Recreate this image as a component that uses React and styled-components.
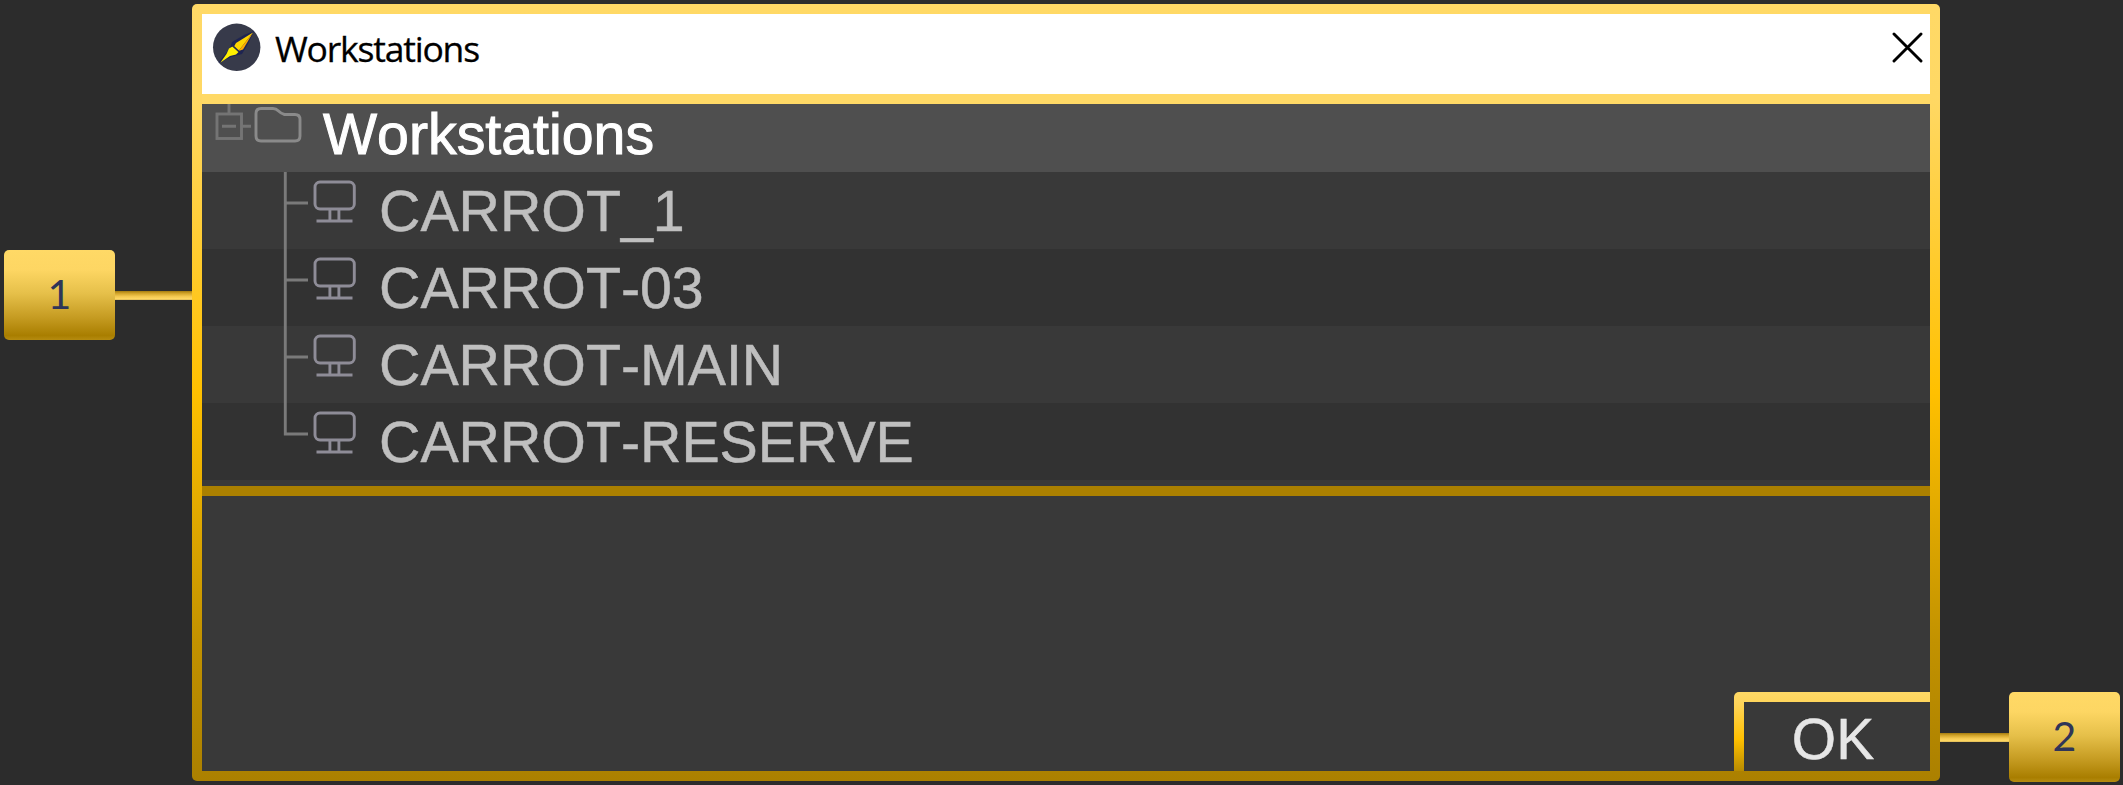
import React from "react";
import styled, { createGlobalStyle } from "styled-components";

const Global = createGlobalStyle`
  * { box-sizing: border-box; }
  body { margin: 0; background: #2c2c2c; overflow: hidden; }
`;

const Page = styled.main`
  display: flex;
  align-items: flex-start;
  width: 2123px;
  height: 785px;
  padding: 4px 0 0 4px;
  background: #2c2c2c;
`;

const Callout = styled.div`
  display: flex;
  align-items: center;
  flex: none;
  margin-top: ${(p) => p.$top}px;
`;

const Badge = styled.div`
  width: 111px;
  height: 90px;
  border-radius: 5px;
  background: linear-gradient(#ffd966 0%, #fdd663 22%, #e6c04a 48%, #c49a20 76%, #a97e00 95%, #b58b10 100%);
  color: #2f3558;
  font: 41px/88px Lato, sans-serif;
  text-align: center;
`;

const Connector = styled.div`
  width: ${(p) => p.$width}px;
  height: 9px;
  background: linear-gradient(#a47c10, #d0a228 25%, #f3c850 60%, #ffd966 90%, #c8a850);
`;

const Frame = styled.section`
  flex: none;
  width: 1748px;
  height: 777px;
  padding: 10px;
  border-radius: 5px;
  background: linear-gradient(#ffd966 0%, #ffd864 12%, #ffc000 50%, #c29200 82%, #ab8000 100%);
`;

const Dialog = styled.div`
  display: flex;
  flex-direction: column;
  height: 757px;
  background: #393939;
`;

const TitleBar = styled.header`
  display: flex;
  align-items: flex-start;
  height: 90px;
  padding: 9px 6px 0 10px;
  border-bottom: 10px solid #ffd966;
  background: #fff;
`;

const Title = styled.h1`
  flex: 1;
  margin: 1px 0 0 13px;
  color: #000;
  font: 400 35.5px/48px "Open Sans", sans-serif;
  letter-spacing: -1.2px;
  -webkit-text-stroke: 0.3px;
`;

const Tree = styled.div`
  height: 392px;
  border-bottom: 10px solid #ab8000;
`;

const Row = styled.div`
  display: flex;
  height: ${(p) => (p.$root ? 68 : 77)}px;
  background: ${(p) => (p.$root ? "#4f4f4f" : p.$odd ? "#323232" : "#393939")};
  color: ${(p) => (p.$root ? "#fff" : "#bfbfbf")};
  font: 57.3px/64px "Liberation Sans", sans-serif;
  font-kerning: none;
  white-space: nowrap;
  -webkit-text-stroke: ${(p) => (p.$root ? 1 : 0.5)}px;
`;

const Label = styled.span`
  margin-top: ${(p) => p.$top}px;
`;

const Footer = styled.footer`
  display: flex;
  flex: 1;
  align-items: flex-end;
  justify-content: flex-end;
`;

const ButtonFrame = styled.div`
  width: 196px;
  height: 79px;
  padding: 10px 0 0 10px;
  border-radius: 5px 0 0 0;
  background: linear-gradient(#ffd966 0%, #ffd55a 15%, #ffc000 60%, #b88b00 100%);
`;

const OkButton = styled.button`
  display: block;
  width: 186px;
  height: 69px;
  padding: 5px 8px 0 0;
  border: 0;
  background: #393939;
  color: #e6e6e6;
  font: 57px/64px "Liberation Sans", sans-serif;
  -webkit-text-stroke: 0.5px;
`;

const stations = ["CARROT_1", "CARROT-03", "CARROT-MAIN", "CARROT-RESERVE"];

const Logo = () => (
  <svg width="50" height="50" viewBox="0 0 50 50">
    <circle cx="24.7" cy="24.3" r="23.7" fill="#373a4a" />
    <path d="M42 8 L32 12 L20 19 L18 25 L6 40 L19 34 L30 31 L36 21 Z" fill="#0d1656" opacity=".6" />
    <path d="M41 9.500 L24 20 L22 23.500 L26.500 28 Z" fill="#ffd500" />
    <path d="M41 9.500 L26.500 28 L31 26.500 Z" fill="#ffac00" />
    <path d="M20.500 23.500 L26.500 29 L24 31.500 L18 33 L8.500 39.500 L14.500 31 L17 25.500 Z" fill="#fff000" />
    <path d="M20.500 22.500 L27 28.500" stroke="#2a2f4c" strokeWidth="1.5" />
  </svg>
);

const CloseIcon = () => (
  <svg width="32" height="48" viewBox="0 0 32 48" stroke="#000" strokeWidth="2.9" strokeLinecap="round">
    <path d="M2 11L29 38M29 11L2 38" />
  </svg>
);

const RootGlyph = () => (
  <svg width="121" height="68" viewBox="0 0 121 68" fill="none" strokeWidth="2.9">
    <g stroke="#747474">
      <rect x="15" y="10" width="24.5" height="24.5" />
      <path d="M27 0V10 M20 22.3H34 M40 22.3H49" />
    </g>
    <path d="M59 4.500H71Q74 4.500 76.500 7T82.500 10.500H93Q98 10.500 98 15.500V32Q98 37 93 37H59Q54 37 54 32V9.500Q54 4.500 59 4.500Z" stroke="#8a8a8a" />
  </svg>
);

const StationGlyph = ({ last }) => (
  <svg width="177" height="77" viewBox="0 0 177 77" fill="none" strokeWidth="2.9">
    <path d={last ? "M83.300 0V31H106" : "M83.300 0V77 M83.300 31H106"} stroke="#7a7a7a" />
    <g stroke="#8e8c97">
      <rect x="113" y="10" width="39.300" height="27" rx="5" />
      <path d="M127.900 37V49 M136.900 37V49 M114.500 49H150.500" />
    </g>
  </svg>
);

export default function App() {
  return (
    <>
      <Global />
      <Page>
        <Callout $top={246}>
          <Badge>1</Badge>
          <Connector $width={77} />
        </Callout>
        <Frame>
          <Dialog>
            <TitleBar>
              <Logo />
              <Title>Workstations</Title>
              <CloseIcon />
            </TitleBar>
            <Tree>
              <Row $root>
                <RootGlyph />
                <Label $top={-2}>Workstations</Label>
              </Row>
              {stations.map((name, i) => (
                <Row key={name} $odd={i % 2 === 1}>
                  <StationGlyph last={i === stations.length - 1} />
                  <Label $top={7}>{name}</Label>
                </Row>
              ))}
            </Tree>
            <Footer>
              <ButtonFrame>
                <OkButton>OK</OkButton>
              </ButtonFrame>
            </Footer>
          </Dialog>
        </Frame>
        <Callout $top={688}>
          <Connector $width={69} />
          <Badge>2</Badge>
        </Callout>
      </Page>
    </>
  );
}
